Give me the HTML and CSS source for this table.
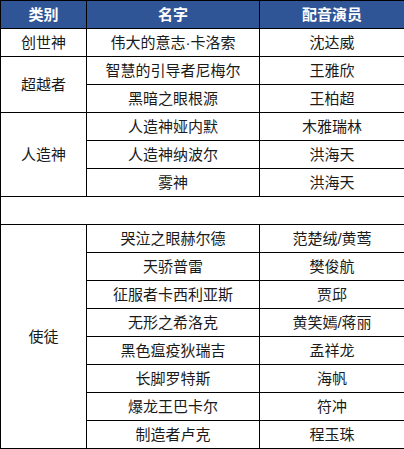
FILE: index.html
```html
<!DOCTYPE html>
<html lang="zh">
<head>
<meta charset="utf-8">
<link rel="stylesheet" href="styles.css">
</head>
<body>
<table class="cast">
  <colgroup>
    <col class="c1"><col class="c2"><col class="c3">
  </colgroup>
  <thead>
    <tr><th>类别</th><th>名字</th><th>配音演员</th></tr>
  </thead>
  <tbody>
    <tr><td>创世神</td><td>伟大的意志·卡洛索</td><td>沈达威</td></tr>
    <tr><td rowspan="2">超越者</td><td>智慧的引导者尼梅尔</td><td>王雅欣</td></tr>
    <tr><td>黑暗之眼根源</td><td>王柏超</td></tr>
    <tr><td rowspan="3">人造神</td><td>人造神娅内默</td><td>木雅瑞林</td></tr>
    <tr><td>人造神纳波尔</td><td>洪海天</td></tr>
    <tr><td>雾神</td><td>洪海天</td></tr>
    <tr><td colspan="3"></td></tr>
    <tr><td rowspan="8">使徒</td><td>哭泣之眼赫尔德</td><td>范楚绒/黄莺</td></tr>
    <tr><td>天骄普雷</td><td>樊俊航</td></tr>
    <tr><td>征服者卡西利亚斯</td><td>贾邱</td></tr>
    <tr><td>无形之希洛克</td><td>黄笑嫣/蒋丽</td></tr>
    <tr><td>黑色瘟疫狄瑞吉</td><td>孟祥龙</td></tr>
    <tr><td>长脚罗特斯</td><td>海帆</td></tr>
    <tr><td>爆龙王巴卡尔</td><td>符冲</td></tr>
    <tr><td>制造者卢克</td><td>程玉珠</td></tr>
  </tbody>
</table>
</body>
</html>
```
FILE: styles.css
```css
html, body {
  margin: 0;
  padding: 0;
  background: #fff;
}
.cast {
  border-collapse: collapse;
  table-layout: fixed;
  width: 404px;
  font-family: "Liberation Sans", "Noto Sans CJK SC", sans-serif;
  font-size: 15px;
  color: #1a1a1a;
}
.c1 { width: 86px; }
.c2 { width: 173px; }
.c3 { width: 145px; }
.cast th, .cast td {
  border: 1px solid #000;
  height: 27px;
  padding: 0;
  text-align: center;
  vertical-align: middle;
  line-height: 20px;
  white-space: nowrap;
}
.cast th {
  background: #2f5597;
  color: #fff;
  font-weight: bold;
}
```
